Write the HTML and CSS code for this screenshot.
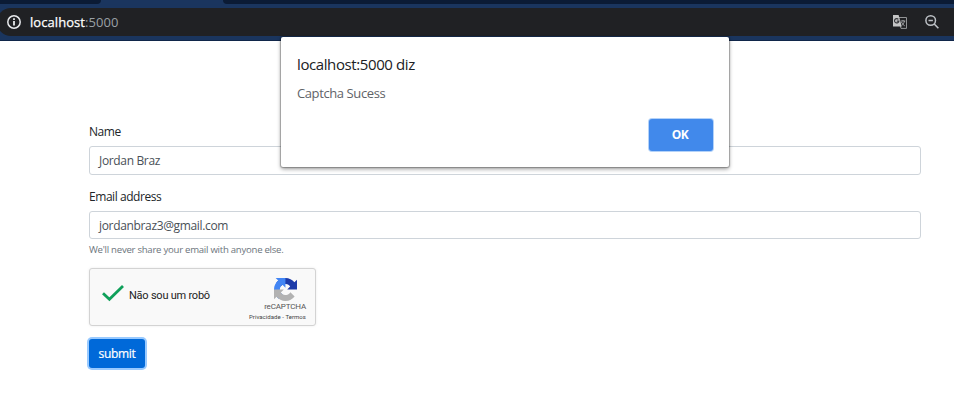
FILE: index.html
```html
<!DOCTYPE html>
<html lang="pt">
<head>
<meta charset="utf-8">
<title>localhost:5000</title>
<link rel="stylesheet" href="styles.css">
</head>
<body>
<header class="browser">
  <div class="tabs"><span class="tab tab-left"></span><span class="tab tab-right"></span></div>
  <div class="omnibox">
    <svg class="info" width="16" height="16" viewBox="0 0 16 16"><circle cx="8" cy="8" r="6.2" fill="none" stroke="#e8eaed" stroke-width="1.5"/><path d="M7.1 4.2h1.8v1.7H7.1zM7.1 7h1.8v4.6H7.1z" fill="#e8eaed"/></svg>
    <span class="url"><b class="host">localhost</b><span class="port">:5000</span></span>
    <svg class="translate" width="16" height="16" viewBox="0 0 16 16"><path d="M6 3.500h8.500v10.900H9L6 3.500z" fill="#202124" stroke="#929496" stroke-width="1"/><path d="M1 1h5.600l3.200 11.500H1z" fill="#c4c5c6"/><path d="M6.400 5.300a2.200 2.200 0 1 0 .5 1.900H4.800" fill="none" stroke="#35363a" stroke-width="1.200"/><path d="M8.700 7h4.600M11 6v1M12.500 7c-.4 2-1.700 3.700-2.700 4.500M9.500 8c.6 1.600 2.100 3.100 3.200 3.800" fill="none" stroke="#a3a5a7" stroke-width="1"/></svg>
    <svg class="magnifier" width="16" height="16" viewBox="0 0 16 16"><circle cx="6.700" cy="6.500" r="4.800" fill="none" stroke="#bdc1c6" stroke-width="1.500"/><path d="M4.500 6.500h4.400M10.200 10l4.200 4.200" fill="none" stroke="#bdc1c6" stroke-width="1.600"/></svg>
  </div>
</header>
<main class="form">
  <label class="label name-label">Name</label>
  <div class="input input-name">Jordan Braz</div>
  <label class="label email-label">Email address</label>
  <div class="input input-email">jordanbraz3@gmail.com</div>
  <small class="help">We'll never share your email with anyone else.</small>
  <section class="captcha">
    <svg class="check" width="24" height="20" viewBox="0 0 24 20"><path d="M2 10.200l6.400 6L22 3" fill="none" stroke="#0fa05a" stroke-width="2.800"/></svg>
    <span class="robot">Não sou um robô</span>
    <div class="brand">
      <svg class="logo" width="23" height="23" viewBox="0 0 64 64">
        <path d="M64 31.955l-.033-1.370V4.687l-7.160 7.160C50.948 4.674 42.033.093 32.050.093c-10.400 0-19.622 4.960-25.458 12.640l11.736 11.860a15.550 15.550 0 0 1 4.754-5.334c2.050-1.600 4.952-2.906 8.968-2.906.485 0 .860.057 1.135.163 4.976.393 9.288 3.140 11.828 7.124l-8.307 8.307z" fill="#1c3aa9"/>
        <path d="M31.862.094l-1.370.033H4.594l7.160 7.160C4.580 13.147 0 22.060 0 32.046c0 10.400 4.960 19.622 12.640 25.458L24.500 45.768a15.550 15.550 0 0 1-5.334-4.754c-1.600-2.050-2.906-4.952-2.906-8.968 0-.485.057-.860.163-1.135.393-4.976 3.140-9.288 7.124-11.828l8.307 8.307z" fill="#4285f4"/>
        <path d="M0 32.045l.033 1.370v25.898l7.160-7.160c5.860 7.173 14.774 11.754 24.760 11.754 10.400 0 19.622-4.960 25.458-12.640l-11.736-11.860a15.550 15.550 0 0 1-4.754 5.334c-2.050 1.600-4.952 2.906-8.968 2.906-.485 0-.860-.057-1.135-.163-4.976-.393-9.288-3.140-11.828-7.124l8.307-8.307z" fill="#b2b2b2"/>
      </svg>
      <span class="brand-name">reCAPTCHA</span>
      <span class="terms">Privacidade - Termos</span>
    </div>
  </section>
  <button class="submit">submit</button>
</main>
<aside class="dialog">
  <h1 class="dialog-title">localhost:5000 diz</h1>
  <p class="dialog-text">Captcha Sucess</p>
  <button class="ok">OK</button>
</aside>
</body>
</html>
```
FILE: styles.css
```css
* { box-sizing: border-box; }
html, body { margin: 0; height: 100%; overflow: hidden; }
body { background: #fff; font-family: "Open Sans", "Noto Sans", sans-serif; color: #212529; }
span { white-space: nowrap; }
button { font-family: inherit; padding: 0; border: 0; }
.browser { height: 41px; background: #1a355e; border-bottom: 1px solid #10264a; }
.tabs { display: flex; justify-content: space-between; height: 4px; }
.tab { background: #0b1b35; height: 4px; }
.tab-left { width: 101px; border-bottom-right-radius: 5px; }
.tab-right { width: 731px; border-bottom-left-radius: 5px; }
.omnibox { display: flex; align-items: center; height: 28px; margin: 4px 0 0 -3px; padding: 0 14px 0 9px; background: #202124; border-radius: 14px 0 0 14px; }
.url { flex: 1; margin-left: 8px; font-size: 13px; line-height: 28px; letter-spacing: .06px; }
.host { font-weight: 400; color: #fff; -webkit-text-stroke: .25px #fff; }
.port { color: #9aa0a6; }
.magnifier { margin-left: 16px; }
.form { display: flex; flex-direction: column; align-items: flex-start; width: 832px; margin: 82px 0 0 89px; }
.label { height: 18px; line-height: 18px; font-size: 12px; letter-spacing: -.45px; }
.input { width: 100%; height: 29px; margin-top: 5px; padding-left: 9px; border: 1px solid #ced4da; border-radius: 3px; font-size: 12px; line-height: 28px; letter-spacing: -.34px; color: #495057; }
.email-label { margin-top: 13px; }
.input-email { height: 28px; }
.help { height: 14px; margin-top: 4px; font-size: 9.6px; line-height: 14px; letter-spacing: -.26px; color: #6c757d; white-space: nowrap; }
.captcha { display: flex; align-items: center; width: 227px; height: 58px; margin-top: 11px; padding-left: 11px; background: #f9f9f9; border: 1px solid #d3d3d3; border-radius: 3px; box-shadow: 0 0 3px rgba(0,0,0,.08); font-family: Roboto, sans-serif; color: #222; }
.check { margin-top: -8px; }
.robot { width: 86px; margin: -3px 0 0 4px; font-size: 11px; letter-spacing: -.23px; }
.brand { display: flex; flex-direction: column; align-items: flex-end; width: 60px; margin: 5px 9px 0 auto; color: #555; }
.logo { margin-right: 9px; }
.brand-name { height: 10px; margin-top: 1px; font-size: 8px; line-height: 10px; letter-spacing: -.15px; }
.terms { height: 9px; font-size: 6px; line-height: 9px; letter-spacing: .05px; color: #444; }
.submit { width: 56px; height: 29px; margin-top: 13px; border-radius: 3px; background: #0069d9; box-shadow: 0 0 0 2px #99caff; color: #fff; font-size: 12px; line-height: 29px; letter-spacing: -.3px; -webkit-text-stroke: .2px #fff; }
.dialog { position: absolute; left: 281px; top: 37px; width: 448px; height: 130px; padding: 17px 16px 18px; background: #fff; border-radius: 2px; box-shadow: 0 0 1px 1px rgba(0,0,0,.25), 0 2px 4px rgba(0,0,0,.4); display: flex; flex-direction: column; }
.dialog-title { margin: 0; height: 20px; font-size: 15px; font-weight: 400; line-height: 20px; letter-spacing: -.4px; color: #202124; }
.dialog-text { margin: 10px 0 0; height: 18px; font-size: 13px; line-height: 18px; letter-spacing: -.4px; color: #5f6368; }
.ok { align-self: flex-end; width: 64px; height: 32px; margin-top: 17px; padding-right: 2px; border-radius: 3px; background: #4189eb; box-shadow: 0 0 0 1px #b3d2f9; color: #fff; font-size: 12px; font-weight: 700; line-height: 32px; letter-spacing: -.4px; }
```
